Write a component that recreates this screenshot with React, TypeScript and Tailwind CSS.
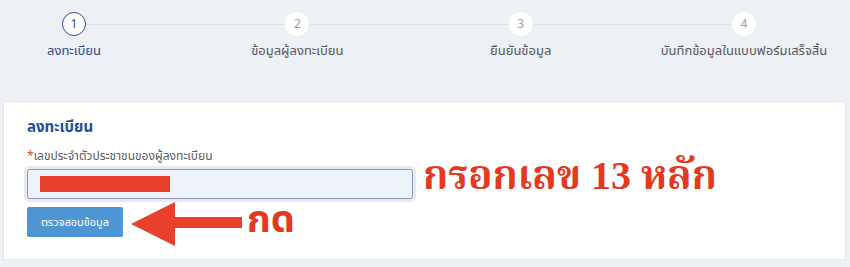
import React from "react";

const steps = [
  { n: "1", label: "ลงทะเบียน", active: true },
  { n: "2", label: "ข้อมูลผู้ลงทะเบียน", active: false },
  { n: "3", label: "ยืนยันข้อมูล", active: false },
  { n: "4", label: "บันทึกข้อมูลในแบบฟอร์มเสร็จสิ้น", active: false },
];

function Circle({ n, active }: { n: string; active: boolean }) {
  return (
    <div
      className={
        active
          ? "flex h-6 w-6 shrink-0 items-center justify-center rounded-full border-[1.5px] border-[#34508f] bg-white text-[12px] text-[#34508f]"
          : "flex h-6 w-6 shrink-0 items-center justify-center rounded-full bg-white text-[12px] text-[#9a9fa8]"
      }
    >
      {n}
    </div>
  );
}

export default function App() {
  return (
    <div className="h-[267px] w-[850px] overflow-hidden bg-[#edf0f5] pt-[12px] font-['Noto_Sans','Noto_Sans_Thai',sans-serif]">
      {/* stepper circles */}
      <div className="flex h-6 w-[756px] items-center pl-[62px]">
        <Circle n="1" active />
        <div className="h-px flex-1 bg-[#dde1e8]" />
        <Circle n="2" active={false} />
        <div className="h-px flex-1 bg-[#dde1e8]" />
        <Circle n="3" active={false} />
        <div className="h-px flex-1 bg-[#dde1e8]" />
        <Circle n="4" active={false} />
      </div>
      {/* stepper labels */}
      <div className="mt-1 flex w-[818px] justify-between">
        {steps.map((s) => (
          <div key={s.n} className="flex w-[148px] flex-col items-center">
            <span
              className={
                s.active
                  ? "whitespace-nowrap text-[13px] leading-5 text-[#2f4b8c]"
                  : "whitespace-nowrap text-[13px] leading-5 text-[#55595f]"
              }
            >
              {s.label}
            </span>
          </div>
        ))}
      </div>

      {/* card */}
      <div className="ml-[3px] mt-[41px] h-[159px] w-[843px] border border-[#e3e7ed] bg-white px-[23px] pt-[14px]">
        <div className="text-[15px] font-bold leading-5 text-[#1f4c9b]">ลงทะเบียน</div>
        <div className="mt-3 text-[12px] leading-4 text-[#5a5d62]">
          <span className="text-[#e0402c]">*</span>เลขประจำตัวประชาชนของผู้ลงทะเบียน
        </div>
        <div className="mt-[5px] flex h-[30px] items-center">
          <div className="flex h-[30px] w-[386px] shrink-0 items-center rounded-[3px] border border-[#8c9ab3] bg-[#eef3fa] pl-[12px] ring-[3px] ring-[#e7ebf1]">
            <div className="h-4 w-[130px] bg-[#e8412b]" />
          </div>
          <span className="ml-[10px] -mt-[16px] whitespace-nowrap font-['Liberation_Serif','Noto_Serif_Thai',serif] text-[40px] font-bold leading-[44px] text-[#e2391f]">
            กรอกเลข 13 หลัก
          </span>
        </div>
        <div className="mt-2 flex h-[30px] items-center">
          <button className="h-[30px] w-[96px] shrink-0 rounded-[2px] bg-[#4d95d3] text-[11px] text-white">
            ตรวจสอบข้อมูล
          </button>
          <svg
            className="-mb-[9px] -mt-[5px] ml-[8px] shrink-0"
            width="112"
            height="44"
            viewBox="0 0 112 44"
          >
            <path
              d="M0 22 L44 0 L44 15 L111 15 L111 26 L44 26 L44 44 Z"
              fill="#e8402a"
            />
          </svg>
          <span className="-mt-[11px] ml-[4px] whitespace-nowrap text-[38px] font-bold leading-[30px] text-[#e2391f]">
            กด
          </span>
        </div>
      </div>
    </div>
  );
}
